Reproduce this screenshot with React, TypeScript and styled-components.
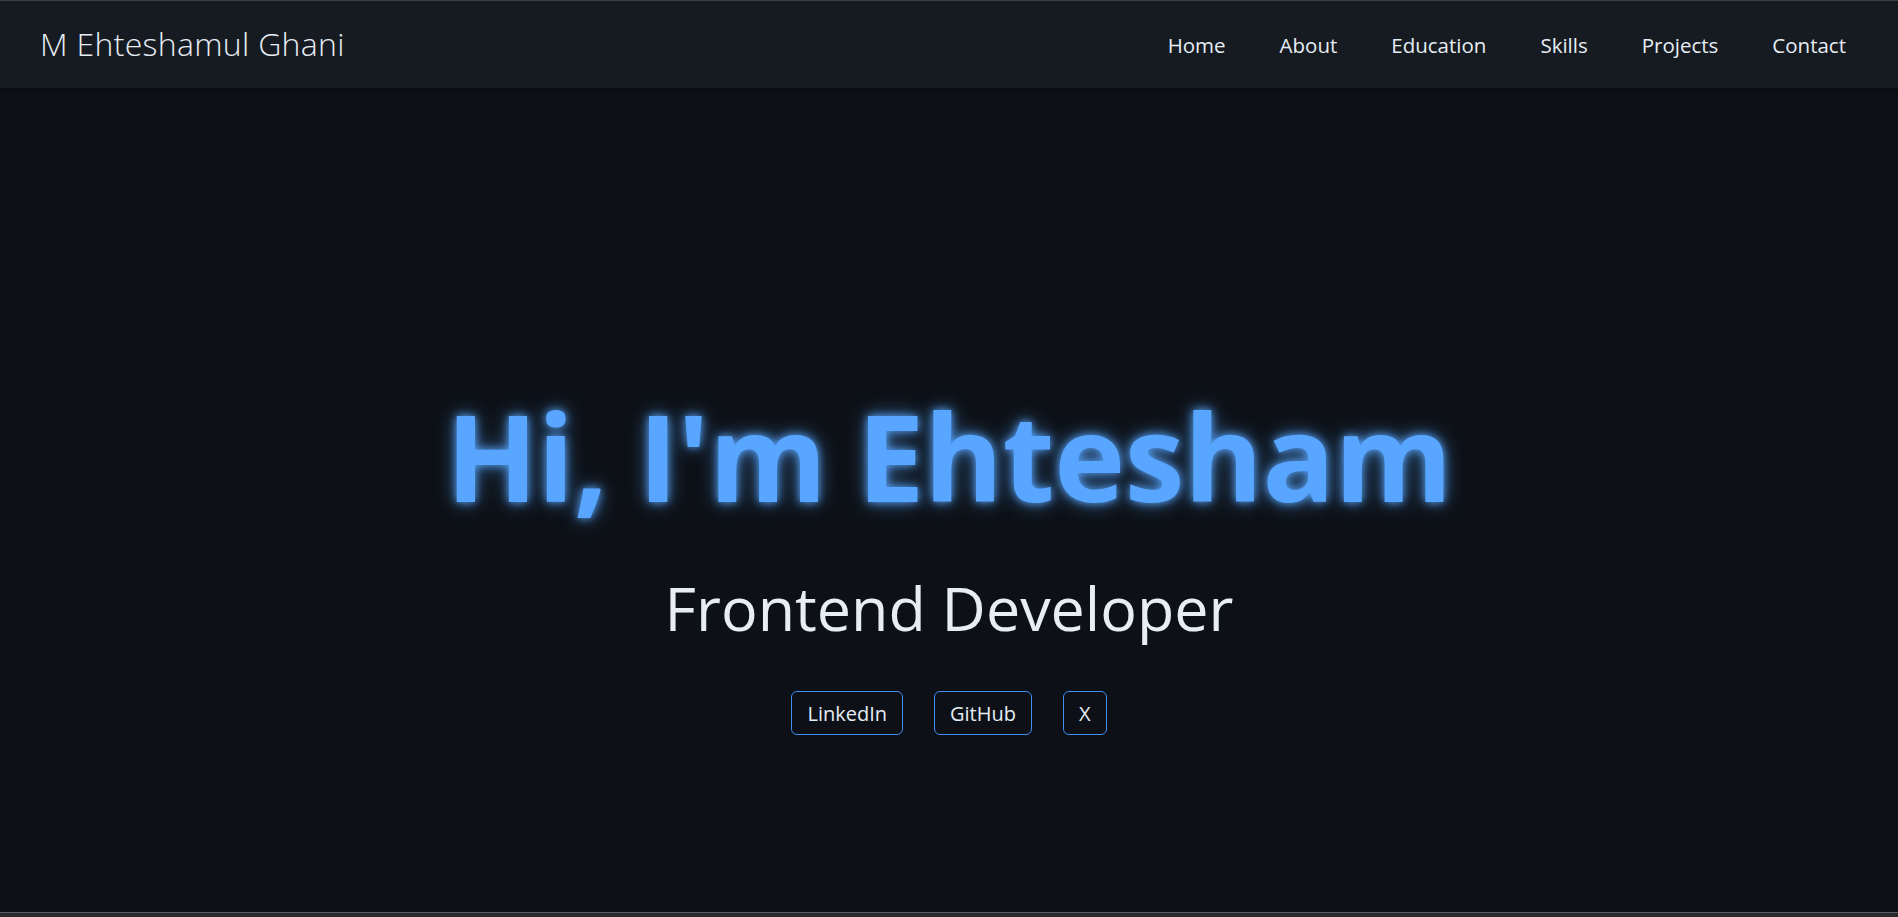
import React from "react";
import styled, { createGlobalStyle } from "styled-components";

const Global = createGlobalStyle`
  html, body { margin: 0; padding: 0; background: #0d1117; }
  body { font-family: "Open Sans", "Noto Sans", sans-serif; color: #e6edf3; }
  * { box-sizing: border-box; }
`;

const Page = styled.div`
  height: 917px;
  display: flex;
  flex-direction: column;
  border-top: 1px solid #3d3f43;
  overflow: hidden;
`;

const Header = styled.header`
  height: 87px;
  flex: none;
  background: #161b22;
  display: flex;
  align-items: center;
  justify-content: space-between;
  padding: 0 52px 0 40px;
  box-shadow: 0 2px 6px rgba(0, 0, 0, 0.35);
  position: relative;
  z-index: 1;
`;

const Logo = styled.div`
  font-size: 32px;
  font-weight: 300;
  color: #e6edf3;
  letter-spacing: 0.3px;
  margin-top: -2px;
`;

const Nav = styled.nav`
  display: flex;
  gap: 54px;
  margin-top: 1px;
`;

const NavLink = styled.a`
  font-size: 20.5px;
  font-weight: 400;
  color: #e6edf3;
  text-decoration: none;
  cursor: pointer;
`;

const Hero = styled.main`
  flex: 1;
  display: flex;
  flex-direction: column;
  align-items: center;
  padding-top: 308px;
`;

const Title = styled.h1`
  margin: 0;
  font-size: 120px;
  font-weight: 700;
  line-height: 1;
  color: #58a6ff;
  letter-spacing: -0.4px;
  text-shadow: 0 0 8px #58a6ff, 0 0 20px rgba(88, 166, 255, 0.6);
`;

const Subtitle = styled.h2`
  margin: 61px 0 0;
  font-size: 61px;
  font-weight: 400;
  line-height: 1;
  color: #e6edf3;
`;

const Links = styled.div`
  display: flex;
  gap: 31px;
  margin-top: 53px;
`;

const SocialButton = styled.a`
  display: inline-flex;
  align-items: center;
  justify-content: center;
  height: 44px;
  padding: 0 15px;
  border: 1px solid #3f8ef0;
  border-radius: 6px;
  font-size: 20px;
  color: #e6edf3;
  text-decoration: none;
`;

const Bottom = styled.div`
  height: 5px;
  flex: none;
  border-top: 1px solid #5b5d61;
  background: #26282c;
`;

export default function App() {
  const nav = ["Home", "About", "Education", "Skills", "Projects", "Contact"];
  return (
    <>
      <Global />
      <Page>
        <Header>
          <Logo>M Ehteshamul Ghani</Logo>
          <Nav>
            {nav.map((n) => (
              <NavLink key={n}>{n}</NavLink>
            ))}
          </Nav>
        </Header>
        <Hero>
          <Title>Hi, I'm Ehtesham</Title>
          <Subtitle>Frontend Developer</Subtitle>
          <Links>
            <SocialButton>LinkedIn</SocialButton>
            <SocialButton>GitHub</SocialButton>
            <SocialButton>X</SocialButton>
          </Links>
        </Hero>
        <Bottom />
      </Page>
    </>
  );
}
